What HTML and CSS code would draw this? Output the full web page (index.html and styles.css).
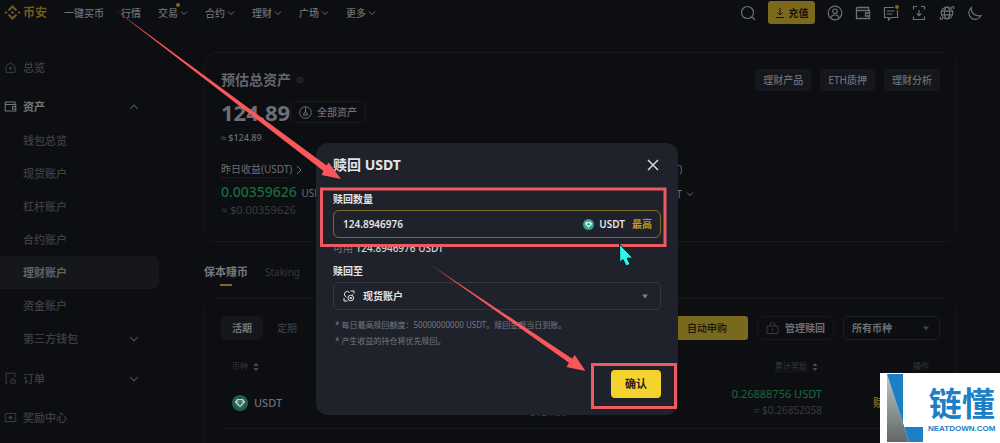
FILE: index.html
```html
<!DOCTYPE html>
<html lang="zh-CN">
<head>
<meta charset="utf-8">
<meta name="viewport" content="width=device-width, initial-scale=1">
<title>理财账户</title>
<link rel="stylesheet" href="styles.css">
</head>
<body>
<svg class="defs" aria-hidden="true">
  <symbol id="down" viewBox="0 0 8 8"><path d="M1 2.5l3 3 3-3" fill="none" stroke="currentColor"/></symbol>
  <symbol id="wallet" viewBox="0 0 16 16"><path d="M1.5 2.5h12v3M1.5 2.5v11h13v-8h-13M14.5 8h-4v3h4" fill="none" stroke="currentColor" stroke-width="1.3"/></symbol>
  <symbol id="sort" viewBox="0 0 6 10"><path d="M3 1l2.5 3h-5z" fill="currentColor"/><path d="M3 9l2.5-3h-5z" fill="currentColor"/></symbol>
  <symbol id="caret" viewBox="0 0 8 8"><path d="M1 2.5h6l-3 4z" fill="currentColor"/></symbol>
  <symbol id="usdt" viewBox="0 0 16 16"><circle cx="8" cy="8" r="8" fill="currentColor"/><path d="M4.8 4h6.4l2 3.2L8 12.6 2.8 7.200z" fill="#fff"/><path d="M5.500 5.300h5v1.300H8.700v.7c1.700.1 2.500.4 2.500.7s-.8.6-2.500.7v2H7.300v-2C5.600 8.600 4.800 8.300 4.800 8s.8-.6 2.500-.7v-.7H5.500z" fill="currentColor"/></symbol>
</svg>

<div class="app">
  <header class="topbar">
    <a class="brand" href="#">
      <svg width="17" height="17" viewBox="0 0 17 17" fill="none" stroke="currentColor" stroke-width="2"><path d="M4.500 6.500l4-4 4 4M4.500 10.500l4 4 4-4"/><path d="M8.500 6.800l1.700 1.700-1.700 1.700-1.700-1.700zM2 7l1.500 1.500L2 10 .5 8.500zM15 7l1.500 1.500L15 10l-1.500-1.500z" fill="currentColor" stroke="none"/></svg>
      <span>币安</span>
    </a>
    <nav class="nav">
      <a href="#">一键买币</a>
      <a href="#">行情</a>
      <a class="has-dot" href="#">交易<svg class="chev"><use href="#down"/></svg></a>
      <a href="#">合约<svg class="chev"><use href="#down"/></svg></a>
      <a href="#">理财<svg class="chev"><use href="#down"/></svg></a>
      <a href="#">广场<svg class="chev"><use href="#down"/></svg></a>
      <a href="#">更多<svg class="chev"><use href="#down"/></svg></a>
    </nav>
    <div class="tools">
      <button class="icon-btn" aria-label="搜索"><svg viewBox="0 0 16 16"><circle cx="7.500" cy="7.500" r="6"/><path d="M12 12l3 3"/></svg></button>
      <button class="deposit"><svg width="10" height="10" viewBox="0 0 10 10" fill="none" stroke="currentColor"><path d="M5 0v7M2.500 4.500L5 7l2.500-2.500M1 9.500h8"/></svg>充值</button>
      <button class="icon-btn" aria-label="账户"><svg viewBox="0 0 16 16"><circle cx="8" cy="8" r="6.800"/><circle cx="8" cy="6.300" r="2.300"/><path d="M3.800 13c.5-2.500 2-3 4.200-3s3.700.5 4.200 3"/></svg></button>
      <button class="icon-btn" aria-label="钱包"><svg><use href="#wallet"/></svg></button>
      <button class="icon-btn has-dot" aria-label="消息"><svg viewBox="0 0 16 16"><path d="M14.500 5v7.500H8L5.500 15v-2.500h-4v-10H11M4 6h7.500M4 9h5.500"/></svg></button>
      <button class="icon-btn" aria-label="下载"><svg viewBox="0 0 16 16"><path d="M2.500 4.500v-3h3.500M10 1.500h3.500v3M2.500 11.500v3h11v-3M8 5v5.500M5.800 8.500L8 10.700l2.200-2.200"/></svg></button>
      <button class="icon-btn" aria-label="语言"><svg viewBox="0 0 16 16"><circle cx="8" cy="8" r="5.800"/><ellipse cx="8" cy="8" rx="2.600" ry="5.800"/><path d="M2.500 6.200h11M2.500 9.800h11M12 2.500c2.500-1.500 3.500-1 2.500 1.500M4 13.500c-2.500 1.500-3.500 1-2.500-1.500"/></svg></button>
      <button class="icon-btn" aria-label="主题"><svg viewBox="0 0 16 16"><path d="M4.500 2.500c-1 5 3 9 9.500 8.200C12 14.500 7.500 15.500 4.300 13 .8 10.200 1 5 4.500 2.500z"/></svg></button>
    </div>
  </header>

  <div class="body">
    <aside class="sidebar">
      <a class="item" href="#"><svg class="lead" viewBox="0 0 16 16"><path d="M2.500 6.500L8 2l5.500 4.500v7.500h-11z"/><path d="M8 7.500L9.500 9 8 10.500 6.500 9z" fill="currentColor"/></svg>总览</a>
      <div>
        <a class="item open" href="#"><svg class="lead"><use href="#wallet"/></svg>资产<svg class="toggle up"><use href="#down"/></svg></a>
        <div class="sub">
          <a class="item" href="#">钱包总览</a>
          <a class="item" href="#">现货账户</a>
          <a class="item" href="#">杠杆账户</a>
          <a class="item" href="#">合约账户</a>
          <a class="item active" href="#">理财账户</a>
          <a class="item" href="#">资金账户</a>
          <a class="item" href="#">第三方钱包<svg class="toggle"><use href="#down"/></svg></a>
        </div>
      </div>
      <a class="item" href="#"><svg class="lead" viewBox="0 0 16 16"><path d="M4.500 14.500h-2v-13h11v5"/><circle cx="11" cy="11.500" r="3.200"/><path d="M11 10v1.800h1.500"/></svg>订单<svg class="toggle"><use href="#down"/></svg></a>
      <a class="item" href="#"><svg class="lead" viewBox="0 0 16 16"><path d="M1.500 3h13v3.500L13 8l1.500 1.500V13h-13V9.500L3 8 1.500 6.500z"/><path d="M8 6l2 2-2 2-2-2z" fill="currentColor"/></svg>奖励中心</a>
    </aside>

    <main class="main">
      <section class="card summary">
        <div class="summary-head">
          <h1>预估总资产</h1>
          <svg class="eye" viewBox="0 0 10 8" fill="none" stroke="currentColor"><path d="M1 4c2-3.300 6-3.300 8 0-2 3.300-6 3.300-8 0z"/><circle cx="5" cy="4" r="1"/></svg>
          <div class="links">
            <a href="#">理财产品</a><a href="#">ETH质押</a><a href="#">理财分析</a>
          </div>
        </div>
        <div class="total">
          <strong>124.89</strong>
          <button class="all"><svg width="13" height="13" viewBox="0 0 13 13" fill="none" stroke="currentColor"><circle cx="6.500" cy="6.500" r="5.800"/><path d="M6.500 1v4M6.500 5L4.300 9h4.400z"/></svg>全部资产</button>
        </div>
        <p class="approx"><span class="sign">≈</span> $124.89</p>
        <div class="stats">
          <div>
            <a class="stat-name" href="#"><span>昨日收益(USDT)</span><svg viewBox="0 0 6 10" width="6" height="10" fill="none" stroke="currentColor"><path d="M1 1l4 4-4 4"/></svg></a>
            <p class="gain"><b>0.00359626</b> USDT</p>
            <p class="gain-usd"><span class="sign">≈</span> $0.00359626</p>
          </div>
          <div>
            <a class="stat-name" href="#"><span>累计收益(USDT)</span></a>
            <p class="unit">USDT<svg class="chev"><use href="#down"/></svg></p>
          </div>
        </div>
      </section>

      <nav class="tabs"><a class="on" href="#">保本赚币</a><a href="#">Staking</a></nav>

      <section class="card products">
        <div class="filters">
          <button class="term on">活期</button>
          <button class="term">定期</button>
          <button class="auto">自动申购</button>
          <button class="manage"><svg width="13" height="13" viewBox="0 0 13 13" fill="none" stroke="currentColor"><path d="M1 5h11v7.500H1zM4 5V3l2.500-2L9 3v2M6.500 7.500v2.500"/></svg>管理赎回</button>
          <label class="picker coin-picker"><select aria-label="币种"><option>所有币种</option></select><svg class="caret"><use href="#caret"/></svg></label>
        </div>
        <table>
          <thead>
            <tr><th>币种<svg class="sort gold"><use href="#sort"/></svg></th><th></th><th><span class="dotted">累计奖励</span><svg class="sort"><use href="#sort"/></svg></th><th>操作</th></tr>
          </thead>
          <tbody>
            <tr>
              <td><span class="coin"><svg><use href="#usdt"/></svg>USDT</span></td>
              <td><small class="held"><span class="sign">≈</span> $124.89</small></td>
              <td><b>0.26888756 USDT</b><small><span class="sign">≈</span> $0.26852058</small></td>
              <td><a href="#">赎回</a></td>
            </tr>
          </tbody>
        </table>
      </section>
    </main>
  </div>
</div>

<div class="layer">
  <form class="modal" role="dialog" aria-labelledby="dlg-title">
    <div class="modal-head">
      <h2 id="dlg-title">赎回 USDT</h2>
      <button type="button" class="close" aria-label="关闭"><svg width="12" height="12" viewBox="0 0 12 12" fill="none" stroke="currentColor" stroke-width="1.400"><path d="M1 1l10 10M11 1L1 11"/></svg></button>
    </div>
    <label class="field-name" for="amount">赎回数量</label>
    <div class="amount-box">
      <input id="amount" type="text" value="124.8946976">
      <svg class="coin-icon"><use href="#usdt"/></svg>
      <span>USDT</span>
      <button type="button" class="max">最高</button>
    </div>
    <p class="available">可用 <b>124.8946976 USDT</b></p>
    <label class="field-name" for="target">赎回至</label>
    <div class="picker target-picker">
      <svg class="spot" viewBox="0 0 12 12" fill="none" stroke="currentColor"><path d="M7.500 1h3.500v2.500M1 8v3h3.500M2 6a2.800 2.800 0 1 1 4.500-3.500M2 6l1.500 1M9.500 4.500v1"/><circle cx="7.800" cy="8" r="2.800"/><path d="M7.800 7l1 1-1 1-1-1z"/></svg>
      <select id="target"><option>现货账户</option></select>
      <svg class="caret"><use href="#caret"/></svg>
    </div>
    <ul class="notes">
      <li>* 每日最高赎回额度：50000000000 USDT。赎回金额当日到账。</li>
      <li>* 产生收益的持仓将优先赎回。</li>
    </ul>
    <button type="button" class="confirm">确认</button>
  </form>
</div>

<svg class="marks" width="1000" height="443" viewBox="0 0 1000 443" aria-hidden="true">
  <g fill="none" stroke="#ec5b61" stroke-width="3"><path d="M321.500 189h343.500v56.500H321.500z"/><path d="M592.500 364.500h83v43h-83z"/></g>
  <g fill="#f9575a">
    <path d="M114 9l212.500 156.500 2.200-3L341 179l-19.500-4 2-4z"/>
    <path d="M431 265l141.300 93.700 2.400-3.700L585.500 371l-19-4 2.500-4.300z"/>
  </g>
  <path d="M619.500 244l.3 18.500 3.200-3 3 6.500 4.200-1.600-3-6.200h5.600z" fill="#2ff5ea" stroke="#06191b"/>
</svg>

<div class="watermark">
  <svg width="38" height="68" viewBox="0 0 38 68"><defs><linearGradient id="steel" x1="0" y1="0" x2="0" y2="1"><stop offset="0" stop-color="#c2c5c6"/><stop offset="1" stop-color="#606669"/></linearGradient></defs><path d="M1 0v68h22z" fill="url(#steel)"/><path d="M1 0h16v53h20v15H23z" fill="#1b80c6"/></svg>
  <div class="mark-text"><span class="mark-name">链懂</span><span class="mark-site">NEATDOWN.COM</span></div>
</div>
</body>
</html>
```

FILE: styles.css
```css
* { box-sizing: border-box; }
body, h1, h2, p, ul { margin: 0; padding: 0; }
body {
  background: #0c0e12;
  color: #6c6f75;
  font: 10px/16px "Noto Sans", "Noto Sans CJK SC", sans-serif;
  overflow: hidden;
}
a { color: inherit; text-decoration: none; }
button, input, select { font: inherit; color: inherit; background: none; border: 0; padding: 0; margin: 0; }
select { appearance: none; width: 100%; }
.defs { position: absolute; width: 0; height: 0; }
svg { flex: none; }
.sign { font-family: "Liberation Sans", sans-serif; }

.app { display: flex; flex-direction: column; min-height: 100vh; }
.body { display: flex; flex: 1; }

/* Top bar */
.topbar { display: flex; align-items: center; height: 25px; padding: 0 17px 0 4px; }
.brand { display: flex; align-items: center; gap: 2px; width: 60px; color: #725b16; font-size: 12px; font-weight: 700; }
.nav { display: flex; gap: 17px; font-weight: 500; }
.nav a { display: flex; align-items: center; gap: 2px; position: relative; }
.chev { width: 8px; height: 8px; }
.has-dot { position: relative; }
.has-dot::after { content: ""; position: absolute; top: -2px; right: 8px; width: 4px; height: 4px; border-radius: 50%; background: #80681a; }
.icon-btn.has-dot::after { top: 0; right: 0; }
.tools { display: flex; align-items: center; gap: 12px; margin-left: auto; }
.icon-btn { width: 16px; height: 16px; }
.icon-btn svg { display: block; width: 16px; height: 16px; fill: none; stroke: currentColor; stroke-width: 1.2; }
.deposit { display: flex; align-items: center; justify-content: center; gap: 4px; width: 47px; height: 23px; border-radius: 3px; background: #7c691c; color: #15140f; font-weight: 700; }

/* Side menu */
.sidebar { display: flex; flex-direction: column; gap: 6px; width: 159px; padding-top: 26px; font-size: 11px; color: #3e4045; }
.item { display: flex; align-items: center; height: 33px; padding: 0 20px 0 4px; border-radius: 0 6px 6px 0; font-weight: 500; }
.sub { padding: 1px 0; }
.sub .item { padding-left: 23px; }
.item.open { color: #74777c; font-weight: 700; }
.sub .active { background: #15171b; color: #606368; font-weight: 700; }
.lead { width: 13px; height: 13px; margin-right: 6px; fill: none; stroke: currentColor; stroke-width: 1.2; }
.toggle { width: 10px; height: 10px; margin-left: auto; color: #4c4f54; }
.up { transform: rotate(180deg); }

/* Main column */
.main { display: flex; flex-direction: column; flex: 1; padding: 27px 43px 0 45px; }
.card { border: 1px solid #15171b; border-radius: 12px; padding: 16px; }
.summary { min-height: 190px; }
.summary-head { display: flex; align-items: center; height: 22px; gap: 4px; }
h1 { font-size: 14px; font-weight: 700; color: #63666b; }
.eye { width: 10px; height: 8px; color: #303238; }
.links { display: flex; gap: 9px; margin-left: auto; }
.links a { padding: 3px 8px; border-radius: 4px; background: #15171c; font-weight: 500; }
.total { display: flex; align-items: center; height: 22px; margin-top: 10px; }
.total strong { font-size: 22px; }
.all { display: flex; align-items: center; gap: 5px; height: 22px; padding: 0 8px; border: 1px solid #191b20; border-radius: 6px; font-weight: 500; }
.approx { margin-top: 7px; font-size: 9px; font-weight: 500; }
.stats { display: grid; grid-template-columns: 390px 1fr; margin-top: 15px; }
.stat-name { display: flex; align-items: center; gap: 4px; }
.stat-name span { border-bottom: 1px dotted #24272c; }
.gain { margin-top: 5px; line-height: 18px; }
.gain b { margin-right: 2px; color: #1b6841; font-size: 14px; font-weight: 500; }
.gain-usd { font-size: 11px; color: #393b40; }
.unit { display: flex; align-items: center; justify-content: flex-end; gap: 4px; width: 83px; margin-top: 8px; }

.tabs { display: flex; gap: 17px; margin-top: 21px; height: 25px; line-height: 18px; color: #36393e; }
.tabs .on { display: flex; flex-direction: column; align-items: center; gap: 3px; color: #75787d; font-size: 11px; font-weight: 700; }
.tabs .on::after { content: ""; width: 12px; height: 2px; background: #80681c; }

.products { flex: 1; margin-top: 10px; border-bottom: 0; border-radius: 12px 12px 0 0; }
.filters { display: flex; align-items: center; height: 25px; }
.filters button { height: 24px; font-weight: 500; }
.filters .term { padding: 0 11px; border-radius: 5px; color: #3a3c41; }
.filters .term.on { background: #15171b; color: #74777c; margin-right: 3px; font-weight: 700; }
.filters .auto { margin-left: auto; padding: 0 21px; border-radius: 3px; background: #7a681c; color: #15140f; }
.filters .manage { display: flex; align-items: center; gap: 6px; margin: 0 9px; padding: 0 8px; border: 1px solid #15171b; border-radius: 4px; font-weight: 700; }
.manage svg { color: #36393e; }
.picker { display: flex; align-items: center; border: 1px solid #1c1f24; border-radius: 5px; }
.coin-picker { width: 97px; height: 24px; padding: 0 9px 0 8px; font-weight: 700; }
.caret { width: 8px; height: 8px; color: #3f4247; }

table { width: 100%; margin-top: 14px; border-collapse: collapse; table-layout: fixed; }
th { height: 24px; padding: 0; color: #36383e; font-size: 8px; font-weight: 400; text-align: right; }
td { height: 50px; padding: 0; border-bottom: 1px solid #15171b; text-align: right; }
th:first-child, td:first-child { width: 91px; padding-left: 11px; text-align: left; }
th:nth-child(3), td:nth-child(3) { width: 255px; }
th:nth-child(4) { width: 118px; padding-right: 11px; }
th:nth-child(3) { padding-right: 4px; }
td:nth-child(4) { padding-right: 45px; color: #80641a; font-size: 11px; font-weight: 700; }
td b { display: block; color: #1b6841; font-size: 11px; font-weight: 400; }
td small { display: block; color: #393b40; font-size: 10px; }
td .held { padding-top: 20px; }
.dotted { border-bottom: 1px dotted #24272c; }
.sort { width: 6px; height: 10px; margin-left: 5px; vertical-align: middle; color: #45484d; }
.sort.gold { color: #5a5127; }
.coin { display: flex; align-items: center; gap: 6px; font-size: 11px; font-weight: 500; }
.coin svg { width: 16px; height: 16px; color: #287565; opacity: .8; }

/* Redeem dialog */
.layer { position: absolute; inset: 0 6px 0 0; display: flex; align-items: flex-start; justify-content: center; padding-top: 143px; }
.modal { display: flex; flex-direction: column; width: 362px; padding: 12px 17px 17px; border-radius: 12px; background: #20222b; color: #e3e5e9; }
.modal-head { display: flex; align-items: center; justify-content: space-between; height: 20px; }
h2 { font-size: 14px; font-weight: 700; }
.close { padding: 2px; line-height: 0; }
.field-name { font-weight: 700; line-height: 16px; margin-top: 16px; }
.amount-box { display: flex; align-items: center; height: 28px; margin-top: 3px; padding: 0 8px 0 9px; border: 1px solid #7f6d27; border-radius: 6px; font-weight: 600; }
.amount-box input { flex: 1; min-width: 0; outline: 0; }
.coin-icon { width: 11px; height: 11px; margin-right: 5px; color: #33a58e; }
.max { margin-left: 7px; color: #c29a1e; font-weight: 700; }
.available { margin-top: 2px; color: #777b84; }
.available b { color: #d5d7dc; font-weight: 500; }
.available + .field-name { margin-top: 7px; }
.target-picker { height: 28px; margin-top: 3px; padding: 0 11px 0 9px; border-color: #343740; font-weight: 700; }
.spot { width: 12px; height: 12px; margin-right: 8px; }
.target-picker .caret { color: #7b7f88; }
.notes { margin-top: 7px; padding-left: 2px; list-style: none; color: #747883; font-size: 8px; line-height: 16px; }
.confirm { align-self: flex-end; width: 50px; height: 28px; margin-top: 21px; border-radius: 4px; background: #f5d32f; color: #26241a; font-size: 11px; font-weight: 700; }

/* Layers above the page */
.marks { position: absolute; top: 0; left: 0; pointer-events: none; }
.watermark { position: absolute; right: 0; bottom: 0; display: flex; align-items: center; gap: 4px; width: 120px; height: 70px; padding-left: 6px; background: #fff; color: #1b80c6; }
.mark-text { display: flex; flex-direction: column; align-items: center; }
.mark-name { font: 700 33px/42px "Noto Sans CJK SC", sans-serif; }
.mark-site { font: 700 8px/12px "Liberation Sans", sans-serif; }
```
